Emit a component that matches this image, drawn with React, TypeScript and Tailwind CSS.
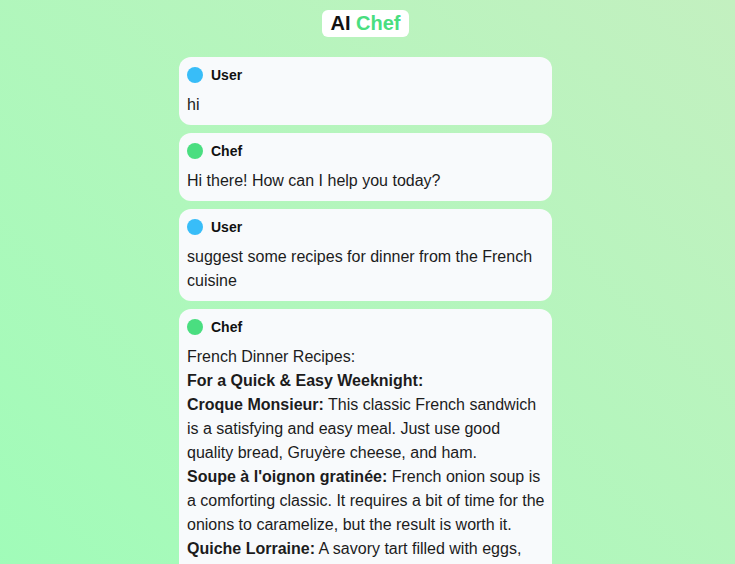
import React from "react";

type Msg = { role: "User" | "Chef"; content: React.ReactNode };

const messages: Msg[] = [
  { role: "User", content: <p>hi</p> },
  { role: "Chef", content: <p>Hi there! How can I help you today?</p> },
  { role: "User", content: <p>suggest some recipes for dinner from the French cuisine</p> },
  {
    role: "Chef",
    content: (
      <div>
        <p>French Dinner Recipes:</p>
        <p className="font-bold">For a Quick &amp; Easy Weeknight:</p>
        <p>
          <span className="font-bold">Croque Monsieur:</span> This classic French sandwich is a satisfying and easy meal. Just use good quality bread, Gruyère cheese, and ham.
        </p>
        <p>
          <span className="font-bold">Soupe à l'oignon gratinée:</span> French onion soup is a comforting classic. It requires a bit of time for the onions to caramelize, but the result is worth it.
        </p>
        <p>
          <span className="font-bold">Quiche Lorraine:</span> A savory tart filled with eggs, cream, bacon, and cheese. It's perfect for a light dinner served with a green salad.
        </p>
        <p className="font-bold">For a Special Occasion:</p>
        <p>
          <span className="font-bold">Coq au Vin:</span> Chicken braised in red wine with mushrooms, onions, and bacon.
        </p>
      </div>
    ),
  },
];

export default function App() {
  return (
    <div
      className="min-h-screen w-full bg-gradient-to-tr from-[#9cfdb8] to-[#c3f0c0] flex flex-col items-center pt-[10px] pb-4 pr-1 text-[#1c1c1c]"
      style={{ fontFamily: '"Liberation Sans", Arial, sans-serif' }}
    >
      <h1 className="bg-white rounded-md px-2 text-xl leading-[27px] font-bold">
        <span className="text-[#111]">AI</span> <span className="text-[#4ade80]">Chef</span>
      </h1>
      <div className="mt-[20px] w-[373px] flex flex-col gap-2">
        {messages.map((m, i) => (
          <div key={i} className="bg-[#f8fafc] rounded-xl pl-2 pr-[5px] pt-[10px] pb-[8px] flex flex-col gap-[10px]">
            <div className="flex items-center gap-2">
              <span
                className={
                  m.role === "User"
                    ? "w-4 h-4 rounded-full bg-[#38bdf8]"
                    : "w-4 h-4 rounded-full bg-[#4ade80]"
                }
              />
              <span className="text-sm font-bold leading-4 text-[#111]">{m.role}</span>
            </div>
            <div className="text-base leading-6">{m.content}</div>
          </div>
        ))}
      </div>
    </div>
  );
}
